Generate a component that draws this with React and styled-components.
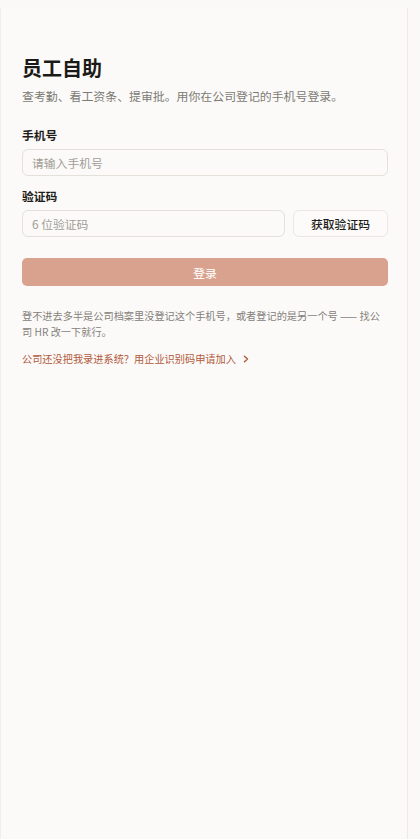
import React from "react";
import styled, { createGlobalStyle } from "styled-components";

const Global = createGlobalStyle`
  html, body { margin: 0; padding: 0; background: #faf9f7; }
  body { font-family: "Noto Sans CJK SC", "Noto Sans", sans-serif; color: #1f1d1a; }
  * { box-sizing: border-box; }
`;

const Shell = styled.div`
  width: 408px;
  min-height: 831px;
  margin-top: 8px;
  background: #fbfaf8;
  border-left: 1px solid #f1efeb;
  border-right: 1px solid #eeebe6;
  padding: 45px 19px 40px 21px;
`;

const Title = styled.h1`
  margin: 0;
  font-size: 20px;
  line-height: 30px;
  font-weight: 700;
  color: #1c1a17;
`;

const Subtitle = styled.p`
  margin: 4px 0 0;
  font-size: 11.9px;
  line-height: 18px;
  color: #7d7a75;
`;

const Form = styled.form`
  display: flex;
  flex-direction: column;
  margin-top: 21px;
`;

const Field = styled.div`
  display: flex;
  flex-direction: column;
  gap: 5px;
  margin-bottom: ${(p) => p.$mb || 0}px;
`;

const Label = styled.label`
  font-size: 11.8px;
  line-height: 18px;
  font-weight: 600;
  color: #1f1d1a;
`;

const Row = styled.div`
  display: flex;
  gap: 8px;
`;

const Input = styled.input`
  flex: ${(p) => (p.$grow ? 1 : "none")};
  width: ${(p) => (p.$grow ? "auto" : "100%")};
  min-width: 0;
  height: 27px;
  border: 1px solid #e4e0da;
  border-radius: 6px;
  background: #fbfaf8;
  padding: 0 9px;
  font-family: inherit;
  font-size: 11.8px;
  color: #1f1d1a;
  outline: none;
  &::placeholder { color: #a19d97; }
`;

const CodeButton = styled.button`
  width: 95px;
  height: 27px;
  border: 1px solid #ebe8e3;
  border-radius: 6px;
  background: #fcfbfa;
  font-family: inherit;
  font-size: 11.8px;
  font-weight: 500;
  color: #1f1d1a;
  padding: 0;
`;

const Submit = styled.button`
  margin-top: 21px;
  height: 28px;
  width: 100%;
  border: none;
  border-radius: 5px;
  background: #d8a28e;
  color: #fdf6f3;
  font-family: inherit;
  font-size: 11.8px;
  font-weight: 500;
`;

const Help = styled.p`
  margin: 22px 0 0;
  font-size: 10.2px;
  line-height: 16px;
  color: #85817b;
`;

const Link = styled.a`
  display: inline-flex;
  align-items: center;
  gap: 6px;
  margin-top: 11px;
  font-size: 10.2px;
  line-height: 16px;
  color: #b1593a;
  text-decoration: none;
  cursor: pointer;
`;

const Chevron = () => (
  <svg width="8" height="8" viewBox="0 0 8 8" fill="none">
    <path d="M2.5 1.2 L5.5 4 L2.5 6.8" stroke="#b1593a" strokeWidth="1.4" strokeLinecap="round" strokeLinejoin="round" />
  </svg>
);

export default function App() {
  return (
    <>
      <Global />
      <Shell>
        <Title>员工自助</Title>
        <Subtitle>查考勤、看工资条、提审批。用你在公司登记的手机号登录。</Subtitle>
        <Form onSubmit={(e) => e.preventDefault()}>
          <Field $mb={11}>
            <Label>手机号</Label>
            <Input placeholder="请输入手机号" />
          </Field>
          <Field>
            <Label>验证码</Label>
            <Row>
              <Input $grow placeholder="6 位验证码" />
              <CodeButton type="button">获取验证码</CodeButton>
            </Row>
          </Field>
          <Submit type="submit">登录</Submit>
        </Form>
        <Help>登不进去多半是公司档案里没登记这个手机号，或者登记的是另一个号 —— 找公司 HR 改一下就行。</Help>
        <Link>
          公司还没把我录进系统？用企业识别码申请加入
          <Chevron />
        </Link>
      </Shell>
    </>
  );
}
